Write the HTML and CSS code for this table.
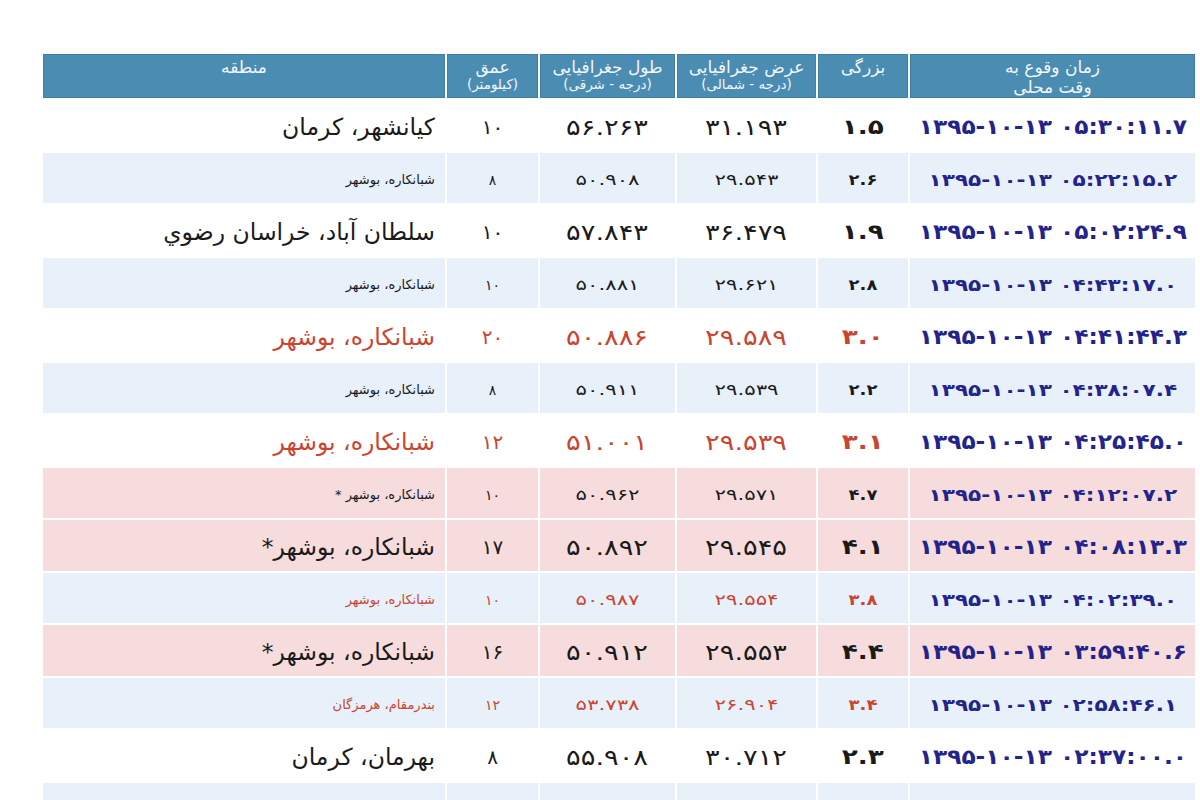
FILE: index.html
```html
<!DOCTYPE html>
<html lang="fa" dir="rtl">
<head>
<meta charset="utf-8">
<title>زلزله</title>
<link rel="stylesheet" href="styles.css">
</head>
<body>
<div class="wrap">
<table class="quakes">
<colgroup>
<col class="c-time"><col class="c-mag"><col class="c-lat"><col class="c-lon"><col class="c-dep"><col class="c-reg">
</colgroup>
<thead>
<tr>
<th>زمان وقوع به<br>وقت محلی</th>
<th>بزرگی</th>
<th>عرض جغرافیایی<br><small>(درجه - شمالی)</small></th>
<th>طول جغرافیایی<br><small>(درجه - شرقی)</small></th>
<th>عمق<br><small>(کیلومتر)</small></th>
<th>منطقه</th>
</tr>
</thead>
<tbody>
<tr class="big">
<td class="time"><bdi class="s" dir="ltr">۱۳۹۵-۱۰-۱۳ ۰۵:۳۰:۱۱.۷</bdi></td><td class="mag"><span class="s">۱.۵</span></td><td class="num"><span class="s">۳۱.۱۹۳</span></td><td class="num"><span class="s">۵۶.۲۶۳</span></td><td class="dep">۱۰</td><td class="reg">کیانشهر، کرمان</td>
</tr>
<tr class="small blue">
<td class="time"><bdi class="s" dir="ltr">۱۳۹۵-۱۰-۱۳ ۰۵:۲۲:۱۵.۲</bdi></td><td class="mag"><span class="s">۲.۶</span></td><td class="num"><span class="s">۲۹.۵۴۳</span></td><td class="num"><span class="s">۵۰.۹۰۸</span></td><td class="dep">۸</td><td class="reg">شبانکاره، بوشهر</td>
</tr>
<tr class="big">
<td class="time"><bdi class="s" dir="ltr">۱۳۹۵-۱۰-۱۳ ۰۵:۰۲:۲۴.۹</bdi></td><td class="mag"><span class="s">۱.۹</span></td><td class="num"><span class="s">۳۶.۴۷۹</span></td><td class="num"><span class="s">۵۷.۸۴۳</span></td><td class="dep">۱۰</td><td class="reg">سلطان آباد، خراسان رضوي</td>
</tr>
<tr class="small blue">
<td class="time"><bdi class="s" dir="ltr">۱۳۹۵-۱۰-۱۳ ۰۴:۴۳:۱۷.۰</bdi></td><td class="mag"><span class="s">۲.۸</span></td><td class="num"><span class="s">۲۹.۶۲۱</span></td><td class="num"><span class="s">۵۰.۸۸۱</span></td><td class="dep">۱۰</td><td class="reg">شبانکاره، بوشهر</td>
</tr>
<tr class="big red">
<td class="time"><bdi class="s" dir="ltr">۱۳۹۵-۱۰-۱۳ ۰۴:۴۱:۴۴.۳</bdi></td><td class="mag"><span class="s">۳.۰</span></td><td class="num"><span class="s">۲۹.۵۸۹</span></td><td class="num"><span class="s">۵۰.۸۸۶</span></td><td class="dep">۲۰</td><td class="reg">شبانکاره، بوشهر</td>
</tr>
<tr class="small blue">
<td class="time"><bdi class="s" dir="ltr">۱۳۹۵-۱۰-۱۳ ۰۴:۳۸:۰۷.۴</bdi></td><td class="mag"><span class="s">۲.۲</span></td><td class="num"><span class="s">۲۹.۵۳۹</span></td><td class="num"><span class="s">۵۰.۹۱۱</span></td><td class="dep">۸</td><td class="reg">شبانکاره، بوشهر</td>
</tr>
<tr class="big red">
<td class="time"><bdi class="s" dir="ltr">۱۳۹۵-۱۰-۱۳ ۰۴:۲۵:۴۵.۰</bdi></td><td class="mag"><span class="s">۳.۱</span></td><td class="num"><span class="s">۲۹.۵۳۹</span></td><td class="num"><span class="s">۵۱.۰۰۱</span></td><td class="dep">۱۲</td><td class="reg">شبانکاره، بوشهر</td>
</tr>
<tr class="small pink">
<td class="time"><bdi class="s" dir="ltr">۱۳۹۵-۱۰-۱۳ ۰۴:۱۲:۰۷.۲</bdi></td><td class="mag"><span class="s">۴.۷</span></td><td class="num"><span class="s">۲۹.۵۷۱</span></td><td class="num"><span class="s">۵۰.۹۶۲</span></td><td class="dep">۱۰</td><td class="reg">شبانکاره، بوشهر *</td>
</tr>
<tr class="big pink">
<td class="time"><bdi class="s" dir="ltr">۱۳۹۵-۱۰-۱۳ ۰۴:۰۸:۱۳.۳</bdi></td><td class="mag"><span class="s">۴.۱</span></td><td class="num"><span class="s">۲۹.۵۴۵</span></td><td class="num"><span class="s">۵۰.۸۹۲</span></td><td class="dep">۱۷</td><td class="reg">شبانکاره، بوشهر*</td>
</tr>
<tr class="small blue red">
<td class="time"><bdi class="s" dir="ltr">۱۳۹۵-۱۰-۱۳ ۰۴:۰۲:۳۹.۰</bdi></td><td class="mag"><span class="s">۳.۸</span></td><td class="num"><span class="s">۲۹.۵۵۴</span></td><td class="num"><span class="s">۵۰.۹۸۷</span></td><td class="dep">۱۰</td><td class="reg">شبانکاره، بوشهر</td>
</tr>
<tr class="big pink">
<td class="time"><bdi class="s" dir="ltr">۱۳۹۵-۱۰-۱۳ ۰۳:۵۹:۴۰.۶</bdi></td><td class="mag"><span class="s">۴.۴</span></td><td class="num"><span class="s">۲۹.۵۵۳</span></td><td class="num"><span class="s">۵۰.۹۱۲</span></td><td class="dep">۱۶</td><td class="reg">شبانکاره، بوشهر*</td>
</tr>
<tr class="small blue red">
<td class="time"><bdi class="s" dir="ltr">۱۳۹۵-۱۰-۱۳ ۰۲:۵۸:۴۶.۱</bdi></td><td class="mag"><span class="s">۳.۴</span></td><td class="num"><span class="s">۲۶.۹۰۴</span></td><td class="num"><span class="s">۵۳.۷۳۸</span></td><td class="dep">۱۲</td><td class="reg">بندرمقام، هرمزگان</td>
</tr>
<tr class="big">
<td class="time"><bdi class="s" dir="ltr">۱۳۹۵-۱۰-۱۳ ۰۲:۳۷:۰۰.۰</bdi></td><td class="mag"><span class="s">۲.۳</span></td><td class="num"><span class="s">۳۰.۷۱۲</span></td><td class="num"><span class="s">۵۵.۹۰۸</span></td><td class="dep">۸</td><td class="reg">بهرمان، کرمان</td>
</tr>
<tr class="small blue">
<td class="time"><bdi class="s" dir="ltr">۱۳۹۵-۱۰-۱۳ ۰۲:۲۵:۱۱.۳</bdi></td><td class="mag"><span class="s">۲.۵</span></td><td class="num"><span class="s">۲۹.۵۶۲</span></td><td class="num"><span class="s">۵۰.۹۴۱</span></td><td class="dep">۸</td><td class="reg">شبانکاره، بوشهر</td>
</tr>
</tbody>
</table>
</div>
</body>
</html>
```

FILE: styles.css
```css
html, body {
  margin: 0;
  padding: 0;
  background: #ffffff;
  overflow: hidden;
}
body {
  font-family: "DejaVu Sans", "Noto Sans", sans-serif;
  color: #1a1a1a;
}
.wrap {
  padding: 52px 3px 0 41px;
}
.quakes {
  width: 1156px;
  border-collapse: separate;
  border-spacing: 2px;
  table-layout: fixed;
}
.c-time { width: 285px; }
.c-mag { width: 90px; }
.c-lat { width: 139px; }
.c-lon { width: 135px; }
.c-dep { width: 91px; }
.c-reg { width: 402px; }

.quakes th {
  background: #4b8cb3;
  color: #f2f7fb;
  font-weight: normal;
  font-size: 17px;
  line-height: 20px;
  height: 44px;
  box-sizing: border-box;
  padding: 3px 4px 0;
  vertical-align: top;
  box-shadow: inset 0 0 0 1px #3f7ea6;
}
.quakes th small {
  display: block;
  font-size: 13.5px;
  line-height: 15px;
}
.quakes td {
  text-align: center;
  height: 50.5px;
  box-sizing: border-box;
  padding: 4px 4px 0;
  white-space: nowrap;
}
.quakes td.reg {
  text-align: right;
  padding-right: 10px;
}
.quakes td.time {
  color: #23238c;
  font-weight: bold;
}
.quakes td.mag {
  font-weight: bold;
}
.quakes td .s {
  display: inline-block;
}

/* large rows */
.big td.reg { font-size: 23.5px; }
.big td.dep { font-size: 20px; }
.big td.num { font-size: 22px; }
.big td.num .s { transform: scaleX(1.24); }
.big td.mag { font-size: 21px; }
.big td.mag .s { transform: scaleX(1.25); }
.big td.time { font-size: 21px; }
.big td.time .s { transform: scaleX(1.11); }

/* small rows */
.small td.reg { font-size: 13px; }
.small td.dep { font-size: 14px; }
.small td.num { font-size: 15px; }
.small td.num .s { transform: scaleX(1.42); }
.small td.mag { font-size: 15px; }
.small td.mag .s { transform: scaleX(1.2); }
.small td.time { font-size: 17px; }
.small td.time .s { transform: scaleX(1.27); }

.blue td { background: #e8f0fa; }
.pink td { background: #f6dcdc; }
.red td { color: #c9452f; }
.red td.time { color: #23238c; }
```
